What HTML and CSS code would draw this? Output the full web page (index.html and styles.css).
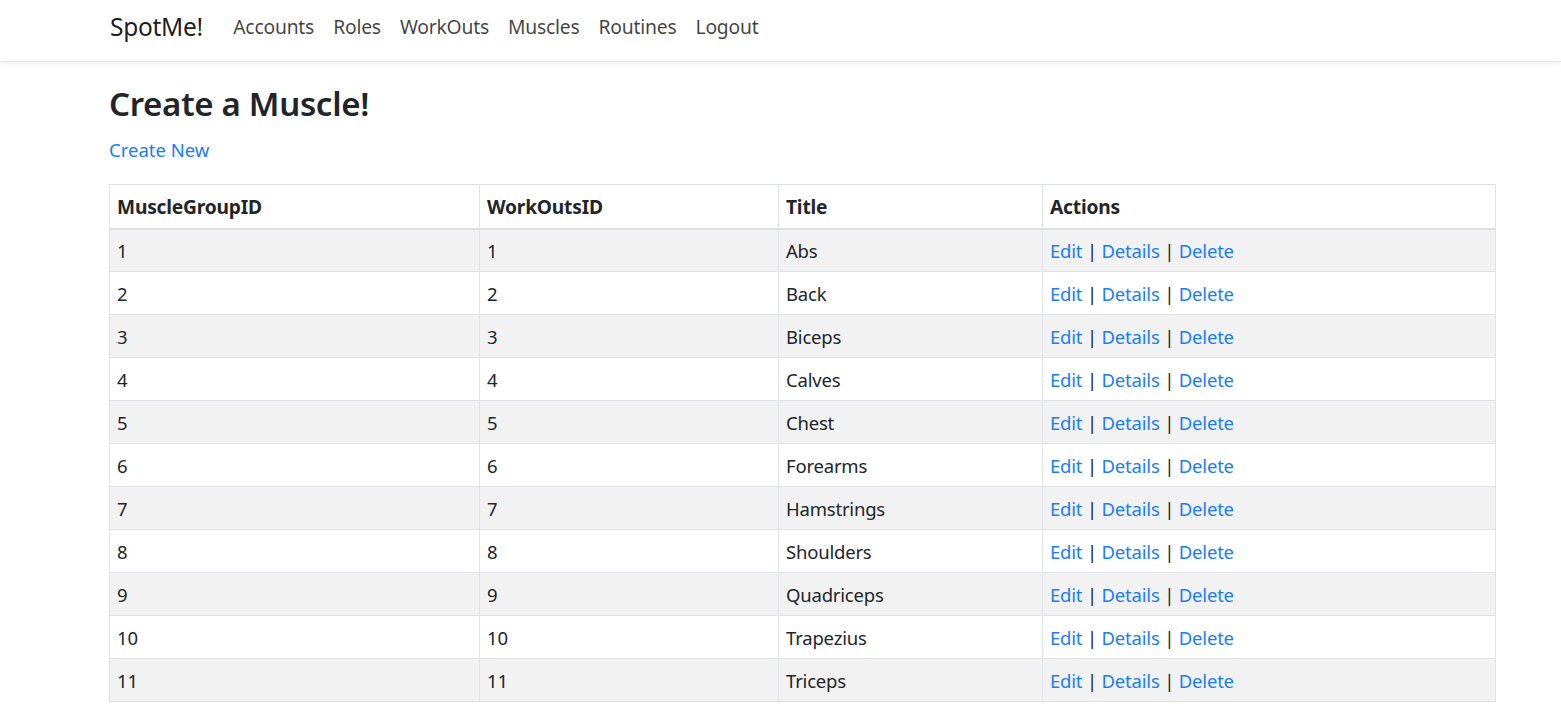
FILE: index.html
```html
<!DOCTYPE html>
<html lang="en">
<head>
<meta charset="utf-8">
<title>Muscles - SpotMe!</title>
<link rel="stylesheet" href="styles.css">
</head>
<body>
<header class="navbar">
  <div class="nav-inner">
    <a class="brand" href="#">SpotMe!</a>
    <nav class="nav-links">
      <a href="#">Accounts</a>
      <a href="#">Roles</a>
      <a href="#">WorkOuts</a>
      <a href="#">Muscles</a>
      <a href="#">Routines</a>
      <a href="#">Logout</a>
    </nav>
  </div>
</header>
<main class="content">
  <h1 class="title">Create a Muscle!</h1>
  <p class="create"><a href="#">Create New</a></p>
  <table class="grid">
    <colgroup>
      <col class="c1"><col class="c2"><col class="c3"><col class="c4">
    </colgroup>
    <thead>
      <tr><th>MuscleGroupID</th><th>WorkOutsID</th><th>Title</th><th>Actions</th></tr>
    </thead>
    <tbody>
      <tr><td>1</td><td>1</td><td>Abs</td><td><a href="#">Edit</a> | <a href="#">Details</a> | <a href="#">Delete</a></td></tr>
      <tr><td>2</td><td>2</td><td>Back</td><td><a href="#">Edit</a> | <a href="#">Details</a> | <a href="#">Delete</a></td></tr>
      <tr><td>3</td><td>3</td><td>Biceps</td><td><a href="#">Edit</a> | <a href="#">Details</a> | <a href="#">Delete</a></td></tr>
      <tr><td>4</td><td>4</td><td>Calves</td><td><a href="#">Edit</a> | <a href="#">Details</a> | <a href="#">Delete</a></td></tr>
      <tr><td>5</td><td>5</td><td>Chest</td><td><a href="#">Edit</a> | <a href="#">Details</a> | <a href="#">Delete</a></td></tr>
      <tr><td>6</td><td>6</td><td>Forearms</td><td><a href="#">Edit</a> | <a href="#">Details</a> | <a href="#">Delete</a></td></tr>
      <tr><td>7</td><td>7</td><td>Hamstrings</td><td><a href="#">Edit</a> | <a href="#">Details</a> | <a href="#">Delete</a></td></tr>
      <tr><td>8</td><td>8</td><td>Shoulders</td><td><a href="#">Edit</a> | <a href="#">Details</a> | <a href="#">Delete</a></td></tr>
      <tr><td>9</td><td>9</td><td>Quadriceps</td><td><a href="#">Edit</a> | <a href="#">Details</a> | <a href="#">Delete</a></td></tr>
      <tr><td>10</td><td>10</td><td>Trapezius</td><td><a href="#">Edit</a> | <a href="#">Details</a> | <a href="#">Delete</a></td></tr>
      <tr><td>11</td><td>11</td><td>Triceps</td><td><a href="#">Edit</a> | <a href="#">Details</a> | <a href="#">Delete</a></td></tr>
    </tbody>
  </table>
</main>
</body>
</html>
```
FILE: styles.css
```css
* { box-sizing: border-box; }
html, body {
  margin: 0;
  padding: 0;
  background: #fff;
  color: #212529;
  font-family: "Noto Sans", "Open Sans", "Liberation Sans", sans-serif;
}
a { text-decoration: none; }

.navbar {
  height: 62px;
  border-bottom: 1px solid #e5e5e5;
  box-shadow: 0 2px 6px rgba(0,0,0,0.06);
  background: #fff;
}
.nav-inner {
  display: flex;
  align-items: center;
  height: 100%;
  padding-left: 110px;
  padding-bottom: 8px;
}
.brand {
  font-size: 24.5px;
  color: rgba(0,0,0,0.9);
  margin-right: 21px;
  letter-spacing: -0.3px;
}
.nav-links {
  display: flex;
}
.nav-links a {
  font-size: 19.3px;
  color: rgba(0,0,0,0.75);
  padding: 0 9.5px;
  letter-spacing: -0.2px;
}

.content {
  padding: 20px 65px 0 109px;
}
.title {
  margin: 0;
  font-size: 33px;
  font-weight: 600;
  line-height: 44px;
  letter-spacing: -0.3px;
}
.create {
  margin: 10px 0 20px 0;
  font-size: 18.5px;
  line-height: 28px;
}
.create a, .grid a { color: #1a7df5; }

.grid {
  width: 100%;
  border-collapse: collapse;
  border: 1px solid #dee2e6;
  font-size: 18.5px;
  table-layout: fixed;
}
.c1 { width: 370px; }
.c2 { width: 299px; }
.c3 { width: 264px; }
.grid th, .grid td {
  border: 1px solid #dee2e6;
  padding: 1px 7px 0 7px;
  text-align: left;
  height: 43px;
  line-height: 28px;
  letter-spacing: -0.2px;
}
.grid th {
  font-weight: 700;
  font-size: 19.2px;
  height: 44px;
  border-bottom: 2px solid #dee2e6;
}
.grid tbody tr:nth-child(odd) { background: #f2f2f2; }
```
